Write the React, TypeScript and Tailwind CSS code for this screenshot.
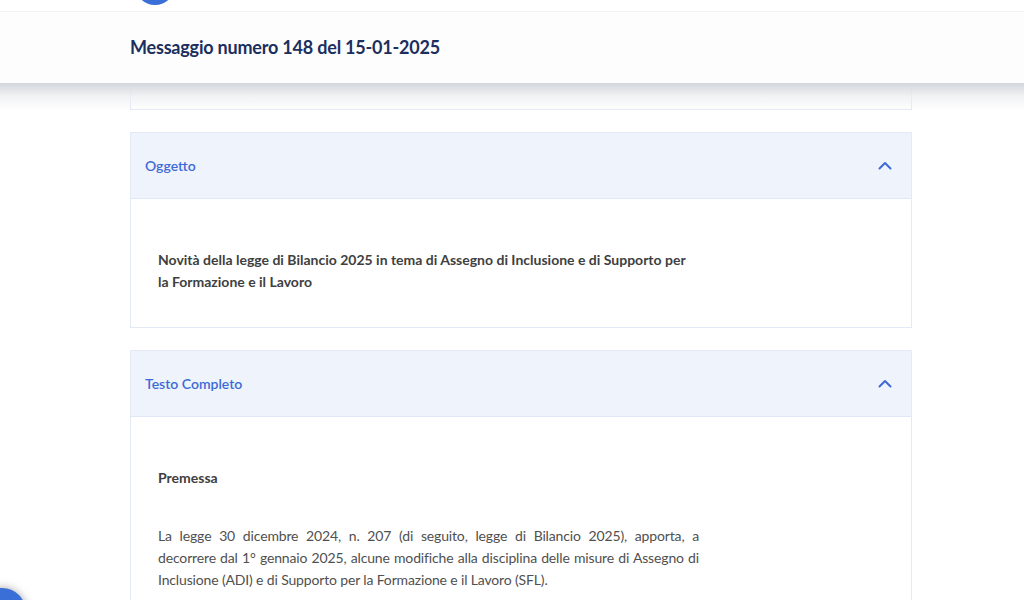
import React from "react";

const Chevron = () => (
  <svg width="16" height="16" viewBox="0 0 16 16" fill="none">
    <path d="M2.5 10.5 L8 5 L13.5 10.5" stroke="#3d6ad6" strokeWidth="2" strokeLinecap="round" strokeLinejoin="round" />
  </svg>
);

export default function App() {
  return (
    <div className="relative w-[1024px] h-[600px] overflow-hidden bg-white" style={{ fontFamily: "Lato, 'Noto Sans', sans-serif" }}>
      {/* top bar */}
      <div className="relative h-[12px] border-b border-[#f1f2f4] bg-white">
        <div className="absolute left-[135px] top-[-35px] w-[40px] h-[40px] rounded-full bg-[#3b6fd8]" />
      </div>
      {/* sticky header */}
      <div className="relative z-10 h-[72px] bg-[#fdfdfd] border-b border-[#e5e8ec] flex items-center pl-[130px]">
        <h1 className="text-[18px] font-bold text-[#1b2f5e] tracking-[-0.2px]">Messaggio numero 148 del 15-01-2025</h1>
        <div className="absolute left-0 right-0 top-full h-[28px] bg-gradient-to-b from-[#d3d7dc] via-[#eceef0]/70 to-transparent" />
      </div>
      {/* content */}
      <div className="flex flex-col gap-[22px] px-[130px] w-[1042px]">
        <div className="h-[26px] border-x border-b border-[#e3e9f6] bg-white w-[782px]" />
        <div className="w-[782px] border border-[#e3e9f6] bg-white">
          <div className="h-[66px] bg-[#eff3fc] border-b border-[#e0e7f7] flex items-center justify-between pl-[14px] pr-[18px]">
            <span className="text-[14px] font-semibold text-[#3d6ad6]">Oggetto</span>
            <Chevron />
          </div>
          <div className="pl-[27px] pt-[50px] pb-[34px]">
            <p className="text-[14px] leading-[22px] font-bold text-[#404040] max-w-[540px]">
              Novità della legge di Bilancio 2025 in tema di Assegno di Inclusione e di Supporto per la Formazione e il Lavoro
            </p>
          </div>
        </div>
        <div className="w-[782px] border border-[#e3e9f6] bg-white h-[300px]">
          <div className="h-[66px] bg-[#eff3fc] border-b border-[#e0e7f7] flex items-center justify-between pl-[14px] pr-[18px]">
            <span className="text-[14px] font-semibold text-[#3d6ad6]">Testo Completo</span>
            <Chevron />
          </div>
          <div className="pl-[27px] pt-[50px]">
            <p className="text-[14px] leading-[22px] font-bold text-[#404040]">Premessa</p>
            <p className="mt-[36px] text-[14px] leading-[22px] text-[#505050] max-w-[541px] tracking-[-0.15px] text-justify">
              La legge 30 dicembre 2024, n. 207 (di seguito, legge di Bilancio 2025), apporta, a decorrere dal 1° gennaio 2025, alcune modifiche alla disciplina delle misure di Assegno di Inclusione (ADI) e di Supporto per la Formazione e il Lavoro (SFL).
            </p>
          </div>
        </div>
      </div>
      {/* floating button */}
      <div className="absolute left-[-22px] top-[588px] w-[48px] h-[48px] rounded-full bg-[#3b6fd8] shadow-[0_0_10px_rgba(0,0,0,0.35)]" />
    </div>
  );
}
